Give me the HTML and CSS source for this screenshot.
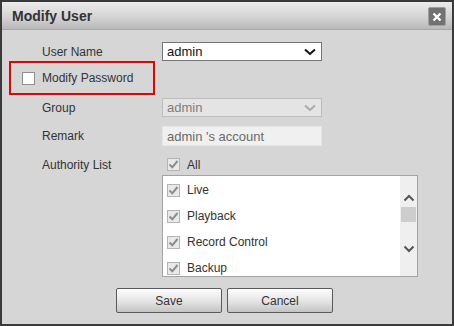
FILE: index.html
```html
<!DOCTYPE html>
<html lang="en">
<head>
<meta charset="UTF-8" />
<title>Modify User</title>
<link rel="stylesheet" href="styles.css">
</head>
<body>
  <div class="dialog">
    <!-- Title bar -->
    <div class="titlebar">
      <span class="title">Modify User</span>
      <span class="close">
        <svg width="10" height="10" viewBox="0 0 10 10"><path d="M1.5 1.5 L8.5 8.5 M8.5 1.5 L1.5 8.5" stroke="#fff" stroke-width="2.4"/></svg>
      </span>
    </div>

    <div class="content">
      <div class="row">
        <span class="label">User Name</span>
        <div class="select">
          <span>admin</span>
          <svg class="arrow" width="12" height="8" viewBox="0 0 12 8"><path d="M1 1.5 L6 6 L11 1.5" fill="none" stroke="#111" stroke-width="2"/></svg>
        </div>
      </div>

      <div class="pwd-box">
        <span class="box"></span>
        <span>Modify Password</span>
      </div>

      <div class="row row-group">
        <span class="label">Group</span>
        <div class="select disabled">
          <span>admin</span>
          <svg class="arrow" width="12" height="8" viewBox="0 0 12 8"><path d="M1 1.5 L6 6 L11 1.5" fill="none" stroke="#aaa" stroke-width="2"/></svg>
        </div>
      </div>

      <div class="row row-remark">
        <span class="label">Remark</span>
        <div class="input">admin 's account</div>
      </div>

      <div class="row row-auth">
        <span class="label">Authority List</span>
        <label class="check">
          <span class="box checked"><svg width="11" height="11" viewBox="0 0 11 11"><path d="M1.5 5.5 L4.3 8.3 L9.5 2" fill="none" stroke="#8c8c8c" stroke-width="2"/></svg></span>
          All
        </label>
      </div>

      <div class="row row-list">
        <span class="label"></span>
        <div class="list">
          <div class="items">
            <label class="check item"><span class="box checked"><svg width="11" height="11" viewBox="0 0 11 11"><path d="M1.5 5.5 L4.3 8.3 L9.5 2" fill="none" stroke="#8c8c8c" stroke-width="2"/></svg></span>Live</label>
            <label class="check item"><span class="box checked"><svg width="11" height="11" viewBox="0 0 11 11"><path d="M1.5 5.5 L4.3 8.3 L9.5 2" fill="none" stroke="#8c8c8c" stroke-width="2"/></svg></span>Playback</label>
            <label class="check item"><span class="box checked"><svg width="11" height="11" viewBox="0 0 11 11"><path d="M1.5 5.5 L4.3 8.3 L9.5 2" fill="none" stroke="#8c8c8c" stroke-width="2"/></svg></span>Record Control</label>
            <label class="check item"><span class="box checked"><svg width="11" height="11" viewBox="0 0 11 11"><path d="M1.5 5.5 L4.3 8.3 L9.5 2" fill="none" stroke="#8c8c8c" stroke-width="2"/></svg></span>Backup</label>
          </div>
          <div class="scrollbar">
            <svg width="12" height="8" viewBox="0 0 12 8"><path d="M1.5 6.5 L6 2 L10.5 6.5" fill="none" stroke="#555" stroke-width="2"/></svg>
            <span class="thumb"></span>
            <svg class="down" width="12" height="8" viewBox="0 0 12 8"><path d="M1.5 1.5 L6 6 L10.5 1.5" fill="none" stroke="#555" stroke-width="2"/></svg>
          </div>
        </div>
      </div>

      <div class="buttons">
        <button class="btn">Save</button>
        <button class="btn">Cancel</button>
      </div>
    </div>
  </div>
</body>
</html>
```

FILE: styles.css
```css
* {
  margin: 0;
  padding: 0;
  box-sizing: border-box;
}

body {
  font-family: 'Liberation Sans', Arial, sans-serif;
  font-size: 12px;
  color: #333;
  background: #3a3a3a;
}

.dialog {
  width: 454px;
  height: 326px;
  border: 2px solid #3a3a3a;
  background: #d6d6d6;
  overflow: hidden;
}

/* Title bar */
.titlebar {
  height: 28px;
  display: flex;
  align-items: center;
  justify-content: space-between;
  padding: 0 6px 0 10px;
  background: linear-gradient(#ececec, #d4d4d4 55%, #b9b9b9);
  border-bottom: 1px solid #a8a8a8;
}

.title {
  font-size: 14px;
  font-weight: bold;
  color: #333;
  margin-top: 1px;
}

.close {
  width: 18px;
  height: 19px;
  display: flex;
  align-items: center;
  justify-content: center;
  background: #727272;
  border: 1px solid #a0a0a0;
  border-radius: 2px;
  margin-top: 2px;
}

/* Form */
.content {
  padding: 12px 0 0 40px;
}

.row {
  display: flex;
  align-items: center;
}

.label {
  width: 120px;
  flex: none;
}

.select {
  width: 160px;
  height: 19px;
  display: flex;
  align-items: center;
  justify-content: space-between;
  padding: 0 5px 0 4px;
  background: #fff;
  border: 1px solid #767676;
  color: #111;
  font-size: 13px;
}

.select.disabled {
  background: #e4e4e4;
  border-color: #bdbdbd;
  color: #7d7d7d;
}

.input {
  width: 160px;
  height: 20px;
  display: flex;
  align-items: center;
  padding-left: 4px;
  background: #f0f0f0;
  border: 1px solid #e6e6e6;
  color: #6a6a6a;
  font-size: 13px;
}

.pwd-box {
  width: 146px;
  height: 34px;
  margin-left: -33px;
  display: flex;
  align-items: center;
  gap: 7px;
  padding-left: 11px;
  border: 2px solid #ee0000;
}

.box {
  width: 13px;
  height: 13px;
  flex: none;
  background: #fff;
  border: 1px solid #8f8f8f;
  display: flex;
  align-items: center;
  justify-content: center;
}

.box.checked {
  background: #e9e9e9;
  border-color: #b4b4b4;
}

.row-group {
  margin-top: 3px;
}

.row-remark {
  margin-top: 9px;
}

.row-auth {
  margin-top: 12px;
  height: 13px;
}

.check {
  display: flex;
  align-items: center;
  gap: 7px;
  padding-left: 5px;
}

.row-list {
  margin-top: 4px;
  align-items: flex-start;
}

.list {
  width: 256px;
  height: 102px;
  display: flex;
  background: #fff;
  border: 1px solid #a3a3a3;
  overflow: hidden;
}

.items {
  flex: 1;
  padding-top: 1px;
}

.item {
  height: 26px;
  padding-left: 4px;
}

.scrollbar {
  width: 17px;
  flex: none;
  background: #efefef;
  display: flex;
  flex-direction: column;
  align-items: center;
  padding-top: 18px;
}

.thumb {
  width: 15px;
  height: 15px;
  margin-top: 5px;
  background: #cdcdcd;
}

.scrollbar .down {
  margin-top: 23px;
}

.buttons {
  display: flex;
  gap: 5px;
  margin-top: 11px;
  padding-left: 74px;
}

.btn {
  width: 106px;
  height: 25px;
  font-family: inherit;
  font-size: 12px;
  color: #333;
  background: linear-gradient(#fdfdfd, #e6e6e6 50%, #c4c4c4);
  border: 1px solid #5a5a5a;
  border-radius: 2px;
}
```
